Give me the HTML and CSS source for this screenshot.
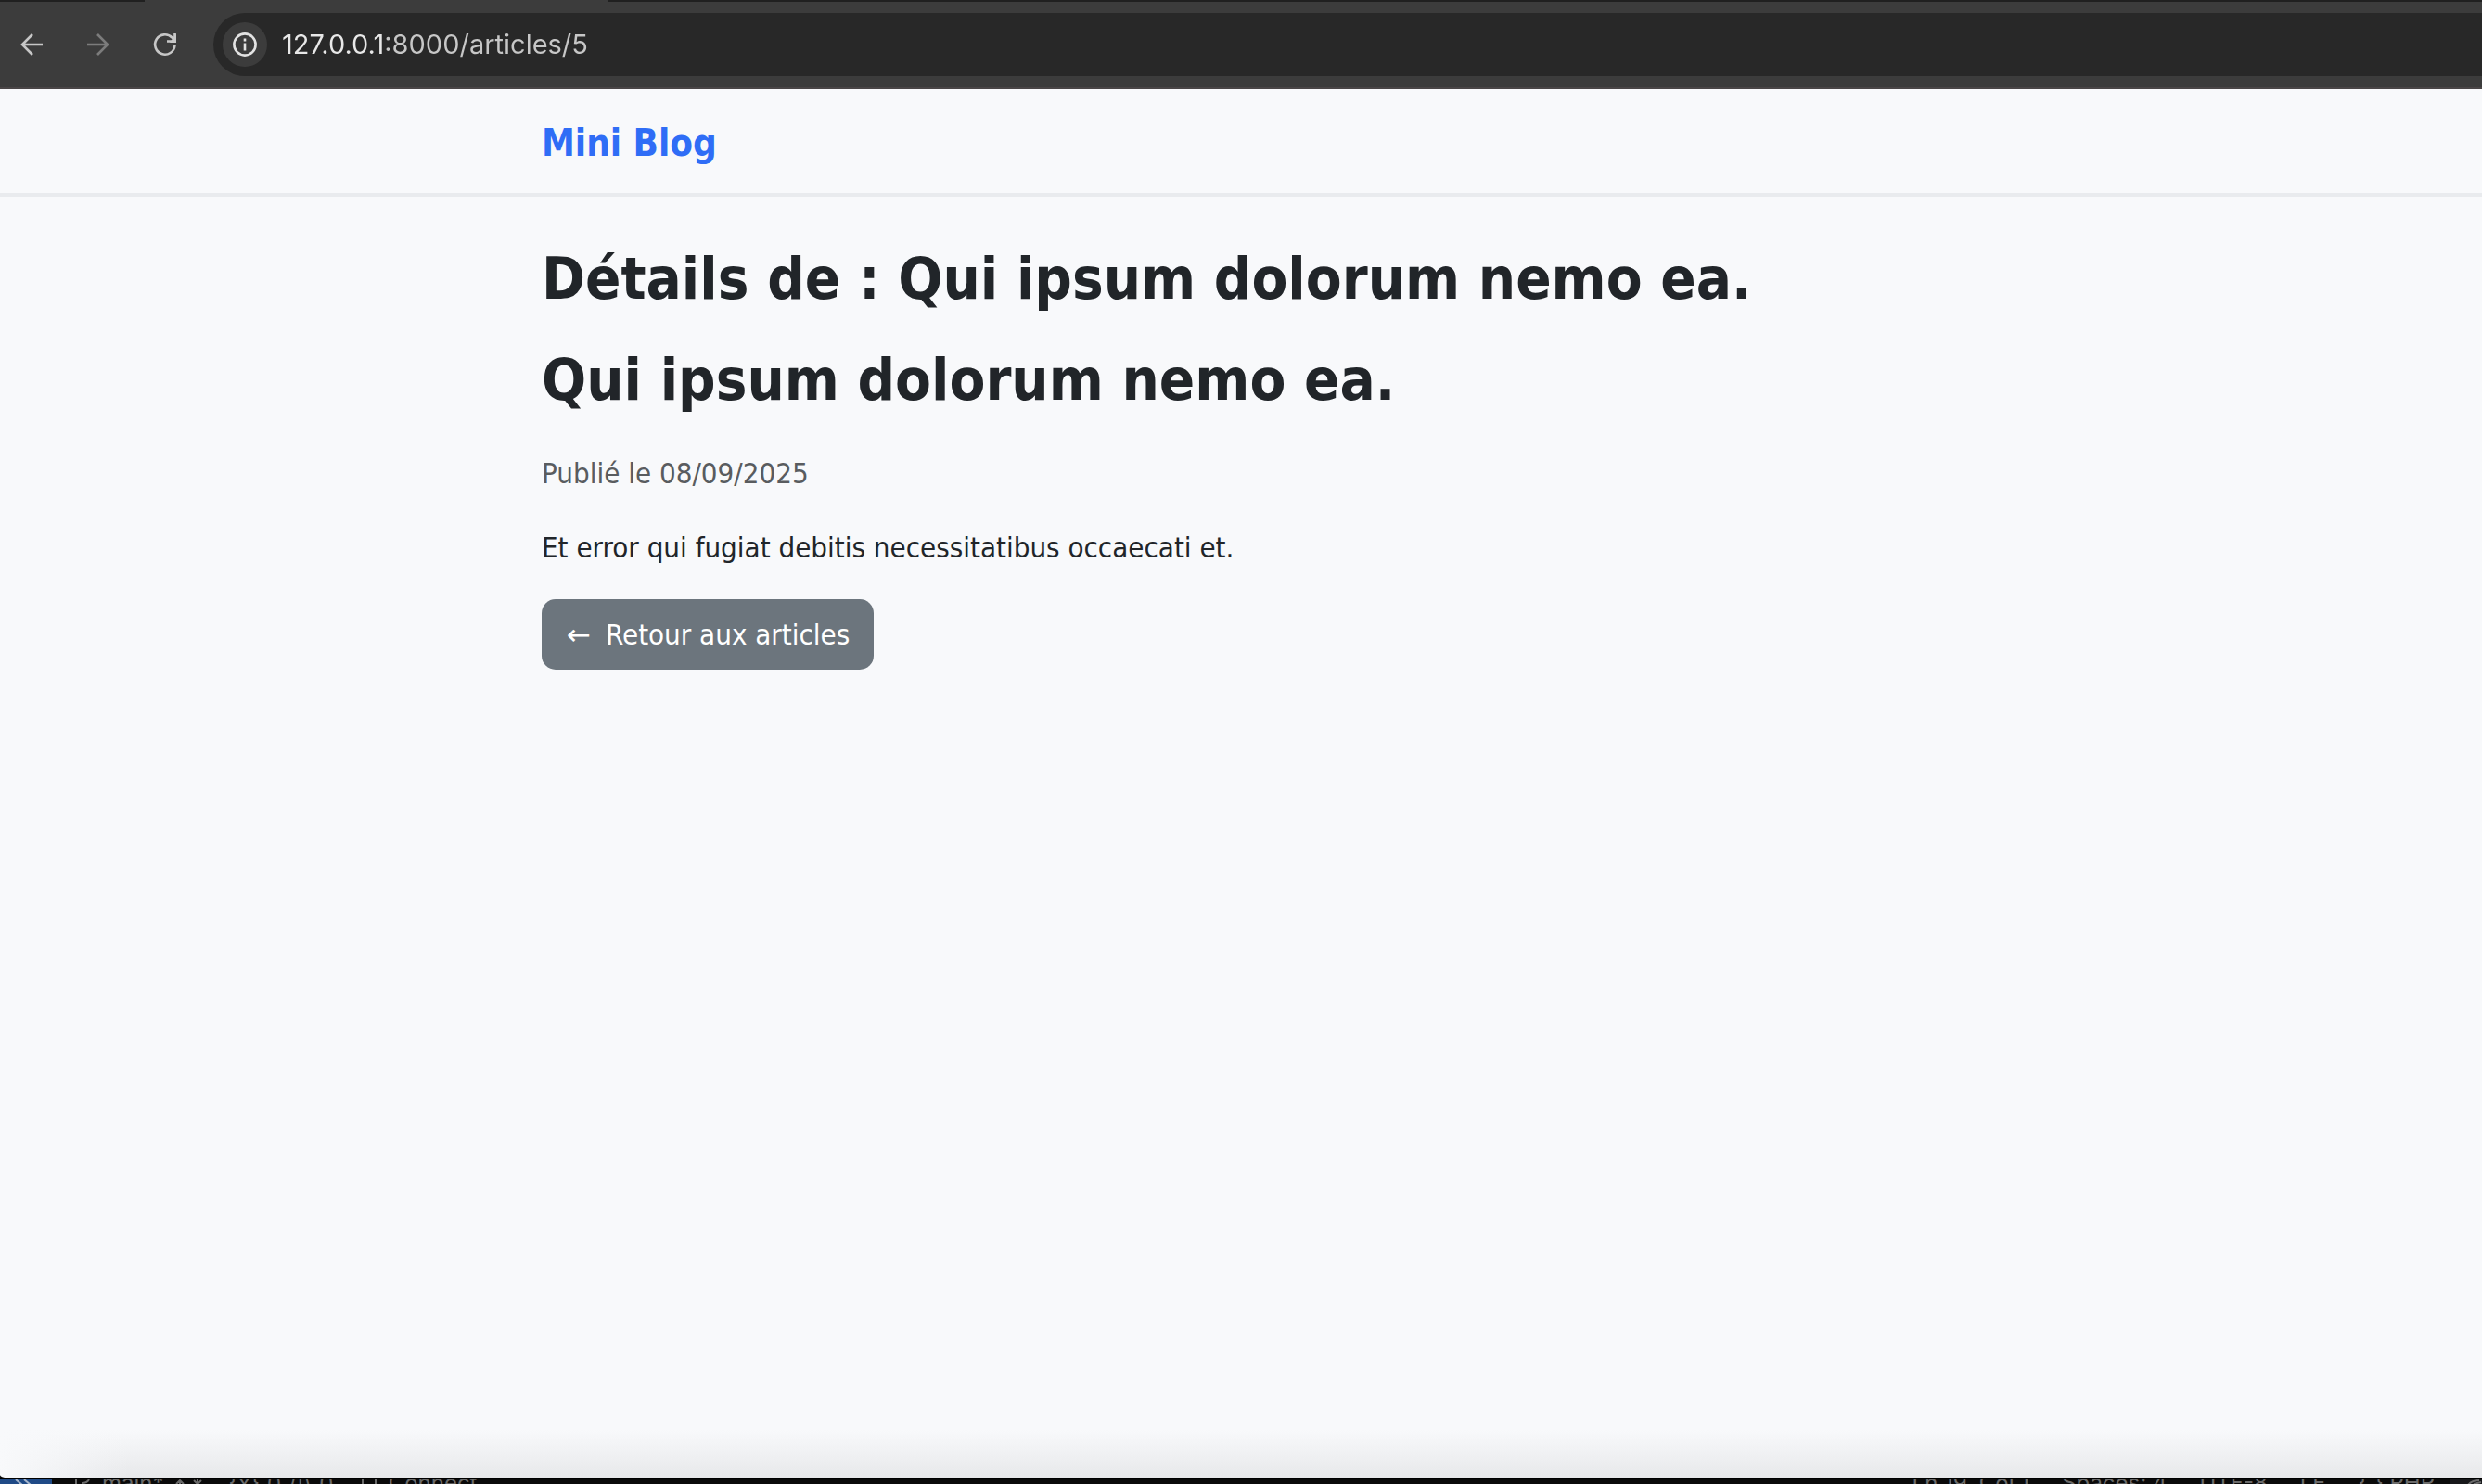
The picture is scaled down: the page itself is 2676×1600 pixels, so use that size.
FILE: index.html
```html
<!DOCTYPE html>
<html lang="fr">
<head>
  <meta charset="utf-8">
  <title>Mini Blog</title>
  <link rel="stylesheet" href="styles.css">
</head>
<body>
  <div class="tabstrip"><span class="tab"></span></div>
  <div class="toolbar">
    <button class="nav-button" type="button" aria-label="Back">
      <svg viewBox="0 0 24 24"><path d="M24 12H2M13 1 2 12l11 11"/></svg>
    </button>
    <button class="nav-button nav-button-off" type="button" aria-label="Forward">
      <svg viewBox="0 0 24 24"><path d="M0 12h22M11 1l11 11-11 11"/></svg>
    </button>
    <button class="nav-button" type="button" aria-label="Reload">
      <svg viewBox="0 0 24 24"><path d="M22.500 13A10.700 10.700 0 1 1 19.500 4.500l3 3.500M22.500 0v8.500H14"/><path class="solid" d="M24 0v10H17z"/></svg>
    </button>
    <div class="omnibox">
      <button class="site-info" type="button" aria-label="Site information">
        <svg viewBox="0 0 26 26"><circle cx="13" cy="13" r="11.600"/><path d="M13 11.500v8M13 6.500v3"/></svg>
      </button>
      <input class="address" type="text" aria-label="Address" value="127.0.0.1:8000/articles/5">
    </div>
  </div>

  <div class="page">
    <header class="site-header">
      <a class="brand" href="#">Mini Blog</a>
    </header>
    <main class="article">
      <h1 class="title">Détails de : Qui ipsum dolorum nemo ea.</h1>
      <h1 class="title">Qui ipsum dolorum nemo ea.</h1>
      <p class="date">Publié le 08/09/2025</p>
      <p class="text">Et error qui fugiat debitis necessitatibus occaecati et.</p>
      <a class="back-link" href="#"><span class="arrow">←</span> Retour aux articles</a>
    </main>
  </div>

  <footer class="statusbar">
    <span class="remote"><svg viewBox="0 0 54 6"><path d="M17 0l7 6M26 0l7 6"/></svg></span>
    <svg class="branch" viewBox="0 0 18 6"><path d="M2 0v6M16 0q-2 4-8 4"/></svg>
    <span class="main">main*</span>
    <svg class="sync" viewBox="0 0 30 6"><path d="M1 5l4-4 4 4M5 1v5M20 1l4 4 4-4M24 0v5"/></svg>
    <span class="braces">{x} () /|\ ()</span>
    <svg class="connect-icon" viewBox="0 0 18 6"><path d="M2 0v6M16 0v6"/></svg>
    <span class="connect">Connect</span>
    <span class="status-right">
      <span>Ln 19, Col 1</span>
      <span>Spaces: 4</span>
      <span>UTF-8</span>
      <span>LF</span>
      <span>{ } PHP</span>
    </span>
    <span class="copilot"><svg viewBox="0 0 35 6"><path d="M20 6q4-5 12-5M26 5l8-2"/></svg></span>
  </footer>
</body>
</html>
```
FILE: styles.css
```css
* {
  box-sizing: border-box;
}

body {
  display: flex;
  flex-direction: column;
  min-height: 100vh;
  margin: 0;
  background: #0a0a0a;
  color: #212529;
  font: 31px/48px "DejaVu Sans Condensed", "DejaVu Sans", sans-serif;
}

button,
input {
  margin: 0;
  padding: 0;
  border: 0;
  background: none;
}

svg {
  display: block;
  fill: none;
  stroke: currentColor;
}

/* Browser frame */
.tabstrip {
  height: 2px;
  padding-left: 156px;
  background: #202020;
}

.tab {
  display: block;
  width: 500px;
  height: 2px;
  background: #3c3c3c;
}

.toolbar {
  display: flex;
  align-items: center;
  gap: 24px;
  height: 94px;
  padding-left: 10px;
  border-bottom: 2px solid #4a4647;
  background: #3c3c3c;
}

.nav-button {
  display: grid;
  place-items: center;
  width: 48px;
  height: 48px;
  color: #c7c7c7;
}

.nav-button-off {
  color: #7c7c7c;
}

.nav-button svg {
  width: 24px;
  height: 24px;
  overflow: visible;
  stroke-width: 2.6;
}

.nav-button .solid {
  fill: currentColor;
  stroke: none;
}

.omnibox {
  display: flex;
  flex: 1;
  align-items: center;
  gap: 16px;
  height: 68px;
  margin-left: 4px;
  padding-left: 10px;
  border-radius: 34px 0 0 34px;
  background: #282828;
}

.site-info {
  display: grid;
  place-items: center;
  width: 48px;
  height: 48px;
  border-radius: 50%;
  background: #3c3c3c;
  color: #e3e3e3;
}

.site-info svg {
  width: 26px;
  height: 26px;
  stroke-width: 2.6;
}

/* The host is brighter than the port and path */
.address {
  flex: 1;
  height: 48px;
  background: linear-gradient(to right, #e8e8e8 112px, #c7c7c7 112px);
  background-clip: text;
  color: transparent;
  font: 29px/48px Inter, sans-serif;
}

/* Blog page */
.page {
  flex: 1;
  border-radius: 0 0 0 14px / 0 0 0 4px;
  background:
    linear-gradient(to right, #f8f9fb, #f8f9fb00 140px) bottom / 100% 52px no-repeat,
    linear-gradient(to top, #e7e8ea, #f8f9fb) bottom / 100% 52px no-repeat,
    #f8f9fb;
}

.site-header {
  padding: 28px 584px 24px;
  border-bottom: 4px solid #e9ebee;
  line-height: 60px;
}

.brand {
  display: block;
  color: #2f6df6;
  font-size: 40px;
  font-weight: 700;
  text-decoration: none;
}

.article {
  padding: 50px 200px 50px 584px;
}

.title {
  margin: 0 0 32px;
  font-size: 63px;
  font-weight: 700;
  line-height: 77px;
}

.date {
  margin: 38px 0 32px;
  color: #595c5f;
}

.text {
  margin: 0 0 32px;
}

.back-link {
  display: inline-flex;
  gap: 16px;
  padding: 14px 26px 14px 27px;
  border-radius: 15px;
  background: #6c757d;
  color: #fff;
  text-decoration: none;
}

.arrow {
  font-family: "DejaVu Sans", sans-serif;
}

/* Editor status bar, showing below the browser window */
.statusbar {
  display: flex;
  height: 6px;
  overflow: hidden;
  border-top: 1px solid #000;
  color: #6a6a6a;
  font: 24px/8px Inter, sans-serif;
  white-space: pre;
}

.statusbar svg {
  height: 6px;
  stroke-width: 2;
}

.remote {
  width: 56px;
  background: #1f4a86;
  color: #a5b5cb;
}

.branch {
  width: 18px;
  margin-left: 24px;
}

.main {
  margin-left: 12px;
}

.sync {
  width: 30px;
  margin-left: 12px;
}

.braces {
  margin-left: 28px;
}

.connect-icon {
  width: 18px;
  margin-left: 28px;
}

.connect {
  margin-left: 12px;
}

.status-right {
  display: flex;
  gap: 35px;
  margin-left: auto;
  padding-right: 16px;
}

.copilot {
  width: 35px;
  background: #17181a;
}
```
